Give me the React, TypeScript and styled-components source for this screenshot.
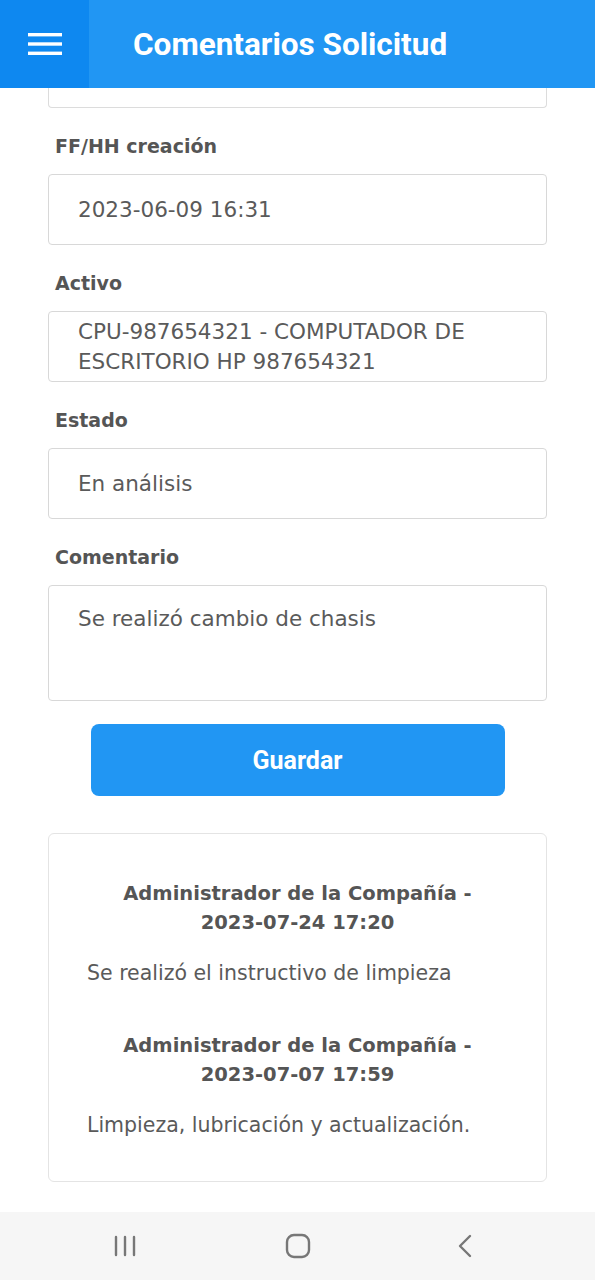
import React from "react";
import styled, { createGlobalStyle } from "styled-components";

const Global = createGlobalStyle`
  html, body { margin: 0; padding: 0; background: #ffffff; }
  body { font-family: "DejaVu Sans", "Open Sans", sans-serif; }
  * { box-sizing: border-box; }
`;

const Page = styled.div`
  width: 595px;
  min-height: 1280px;
  display: flex;
  flex-direction: column;
  background: #ffffff;
`;

const Header = styled.header`
  height: 88px;
  display: flex;
  align-items: stretch;
  background: #2196f3;
`;

const MenuButton = styled.div`
  width: 89px;
  background: #0e88f0;
  display: flex;
  align-items: center;
  justify-content: center;
`;

const Title = styled.h1`
  margin: 0 0 0 44px;
  align-self: center;
  font-family: Roboto, "Liberation Sans", sans-serif;
  font-weight: 700;
  font-size: 31.5px;
  color: #ffffff;
`;

const Content = styled.main`
  padding: 0 48px 0 48px;
  display: flex;
  flex-direction: column;
`;

const Stub = styled.div`
  height: 20px;
  border: 1px solid #dcdcdc;
  border-top: none;
  border-radius: 0 0 4px 4px;
`;

const Label = styled.div`
  margin: 24px 0 14px 7px;
  height: 28px;
  line-height: 28px;
  font-size: 19px;
  font-weight: 700;
  color: #555555;
`;

const Field = styled.div<{ $tall?: boolean }>`
  height: ${(p) => (p.$tall ? "116px" : "71px")};
  border: 1px solid #d8d8d8;
  border-radius: 4px;
  padding: ${(p) => (p.$tall ? "18px 29px 0" : "0 29px")};
  display: flex;
  align-items: ${(p) => (p.$tall ? "flex-start" : "center")};
  font-size: 21.5px;
  line-height: 30px;
  color: #5a5a5a;
`;

const SaveButton = styled.button`
  margin: 23px auto 0;
  width: 414px;
  height: 72px;
  border: none;
  border-radius: 8px;
  background: #2196f3;
  color: #ffffff;
  font-family: Roboto, "Liberation Sans", sans-serif;
  font-weight: 700;
  font-size: 25px;
`;

const Card = styled.section`
  margin-top: 37px;
  border: 1px solid #e4e4e4;
  border-radius: 6px;
  padding: 45px 38px 41px;
  display: flex;
  flex-direction: column;
`;

const CommentHead = styled.div<{ $first?: boolean }>`
  margin-top: ${(p) => (p.$first ? "0" : "43px")};
  text-align: center;
  font-size: 19.5px;
  font-weight: 700;
  line-height: 29px;
  color: #555555;
`;

const CommentText = styled.div`
  margin-top: 21px;
  font-size: 20.5px;
  line-height: 30px;
  color: #5a5a5a;
`;

const NavBar = styled.nav`
  margin-top: auto;
  height: 68px;
  background: #f6f6f6;
  display: flex;
  align-items: center;
  justify-content: space-between;
  padding: 0 122px 0 112px;
`;

const Hamburger = () => (
  <svg width="34" height="24" viewBox="0 0 34 24">
    <rect x="0" y="1" width="34" height="3.4" fill="#fff" />
    <rect x="0" y="10.3" width="34" height="3.4" fill="#fff" />
    <rect x="0" y="19.6" width="34" height="3.4" fill="#fff" />
  </svg>
);

const RecentsIcon = () => (
  <svg width="26" height="22" viewBox="0 0 26 22">
    <g stroke="#777" strokeWidth="2.4" strokeLinecap="round">
      <line x1="4" y1="2" x2="4" y2="20" />
      <line x1="13" y1="2" x2="13" y2="20" />
      <line x1="22" y1="2" x2="22" y2="20" />
    </g>
  </svg>
);

const HomeIcon = () => (
  <svg width="26" height="26" viewBox="0 0 26 26">
    <rect x="2" y="2" width="22" height="22" rx="7" fill="none" stroke="#777" strokeWidth="2.4" />
  </svg>
);

const BackIcon = () => (
  <svg width="16" height="26" viewBox="0 0 16 26">
    <polyline points="13,3 3,13 13,23" fill="none" stroke="#777" strokeWidth="2.4" strokeLinecap="round" strokeLinejoin="round" />
  </svg>
);

const comments = [
  { who: "Administrador de la Compañía -", when: "2023-07-24 17:20", text: "Se realizó el instructivo de limpieza" },
  { who: "Administrador de la Compañía -", when: "2023-07-07 17:59", text: "Limpieza, lubricación y actualización." },
];

export default function App() {
  return (
    <Page>
      <Global />
      <Header>
        <MenuButton>
          <Hamburger />
        </MenuButton>
        <Title>Comentarios Solicitud</Title>
      </Header>
      <Content>
        <Stub />
        <Label>FF/HH creación</Label>
        <Field>2023-06-09 16:31</Field>
        <Label>Activo</Label>
        <Field>CPU-987654321 - COMPUTADOR DE ESCRITORIO HP 987654321</Field>
        <Label>Estado</Label>
        <Field>En análisis</Field>
        <Label>Comentario</Label>
        <Field $tall>Se realizó cambio de chasis</Field>
        <SaveButton>Guardar</SaveButton>
        <Card>
          {comments.map((c, i) => (
            <React.Fragment key={i}>
              <CommentHead $first={i === 0}>
                {c.who}
                <br />
                {c.when}
              </CommentHead>
              <CommentText>{c.text}</CommentText>
            </React.Fragment>
          ))}
        </Card>
      </Content>
      <NavBar>
        <RecentsIcon />
        <HomeIcon />
        <BackIcon />
      </NavBar>
    </Page>
  );
}
